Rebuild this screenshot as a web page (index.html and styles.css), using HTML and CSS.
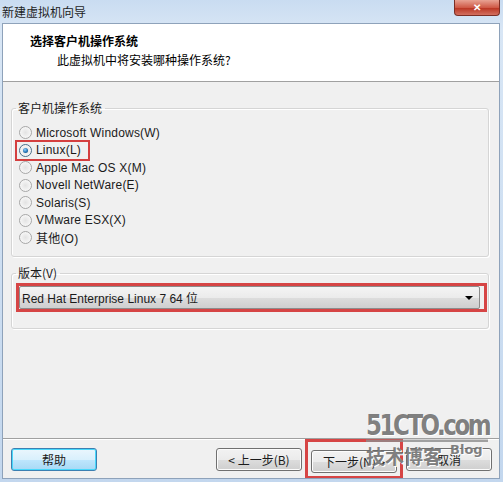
FILE: index.html
```html
<!DOCTYPE html>
<html lang="zh-CN">
<head>
    <meta charset="UTF-8">
    <title>新建虚拟机向导</title>
    <link rel="stylesheet" href="styles.css">
</head>
<body>
    <div class="window">
        <div class="titlebar">
            <span class="title">新建虚拟机向导</span>
            <span class="close">&#x2715;</span>
        </div>
        <div class="client">
            <div class="header">
                <div class="head-title">选择客户机操作系统</div>
                <div class="head-sub">此虚拟机中将安装哪种操作系统?</div>
            </div>
            <div class="content">
                <fieldset class="group">
                    <legend>客户机操作系统</legend>
                    <div class="opt"><span class="radio"></span>Microsoft Windows(W)</div>
                    <div class="opt mark"><span class="radio on"></span>Linux(L)</div>
                    <div class="opt"><span class="radio"></span>Apple Mac OS X(M)</div>
                    <div class="opt"><span class="radio"></span>Novell NetWare(E)</div>
                    <div class="opt"><span class="radio"></span>Solaris(S)</div>
                    <div class="opt"><span class="radio"></span>VMware ESX(X)</div>
                    <div class="opt"><span class="radio"></span>其他(O)</div>
                </fieldset>
                <fieldset class="group version">
                    <legend>版本(V)</legend>
                    <div class="select-mark">
                        <div class="select">
                            <span>Red Hat Enterprise Linux 7 64 位</span>
                            <span class="arrow"></span>
                        </div>
                    </div>
                </fieldset>
            </div>
            <div class="footer">
                <button class="btn default">帮助</button>
                <div class="spacer"></div>
                <button class="btn">&lt; 上一步(B)</button>
                <div class="btn-mark"><button class="btn">下一步(N) &gt;</button></div>
                <button class="btn">取消</button>
            </div>
            <div class="watermark">
                <div class="wm-site">51CTO.com</div>
                <div class="wm-blog">技术博客<span>Blog</span></div>
            </div>
        </div>
    </div>
</body>
</html>
```

FILE: styles.css
```css
body {
    margin: 0;
    font-family: "Liberation Sans", "Noto Sans CJK SC", sans-serif;
    font-size: 12px;
    color: #000;
}
.window {
    width: 503px;
    height: 482px;
    background: linear-gradient(to bottom, #c9dcf1, #d8e6f5 30px, #c3d7ee);
    display: flex;
    flex-direction: column;
}
.titlebar {
    height: 23px;
    display: flex;
    align-items: center;
    justify-content: space-between;
}
.title {
    padding-left: 2px;
    font-family: "Noto Sans CJK SC", sans-serif;
    font-size: 12px;
    color: #1e1e1e;
}
.close {
    align-self: flex-start;
    width: 44px;
    height: 15px;
    margin-right: 3px;
    background: linear-gradient(to bottom, #e8a293, #cf5a47 50%, #b9321f 51%, #d27060);
    border: 1px solid #7b2e25;
    border-top: none;
    border-radius: 0 0 4px 4px;
    color: #fff;
    font-size: 10px;
    font-weight: bold;
    text-align: center;
    line-height: 15px;
}
.client {
    flex: 1;
    margin: 0 3px 3px 2px;
    border: 1px solid #8ea2ba;
    border-top: none;
    background: #f0f0f0;
    display: flex;
    flex-direction: column;
    position: relative;
}
.header {
    height: 57px;
    background: #fff;
    border-top: 1px solid #8ea2ba;
    border-bottom: 1px solid #a0a0a0;
    padding-left: 27px;
}
.head-title {
    margin-top: 9px;
    font-family: "Noto Sans CJK SC", sans-serif;
    font-weight: bold;
    font-size: 12px;
    line-height: 16px;
}
.head-sub {
    margin-top: 3px;
    padding-left: 27px;
    font-family: "Noto Sans CJK SC", sans-serif;
    font-size: 12px;
    line-height: 16px;
}
.content {
    flex: 1;
    padding: 19px 10px 0 8px;
}
.group {
    margin: 0;
    padding: 9px 0 0 0;
    border: 1px solid #d5d5d5;
    border-radius: 3px;
    box-shadow: inset 1px 1px 0 #fff, 1px 1px 0 #fff;
    box-sizing: border-box;
    height: 156px;
}
.group legend {
    margin-left: 4px;
    padding: 0 3px 0 2px;
    font-family: "Noto Sans CJK SC", sans-serif;
    font-size: 12px;
    line-height: 14px;
    color: #1a1a1a;
}
.opt {
    height: 17.5px;
    display: flex;
    align-items: center;
    margin-left: 5px;
    width: 71px;
    white-space: nowrap;
    letter-spacing: 0.2px;
    color: #1a1a1a;
}
.mark {
    outline: 2px solid #d43f3f;
}
.radio {
    width: 11px;
    height: 11px;
    border: 1px solid #a7a7a7;
    border-radius: 50%;
    background: radial-gradient(circle at 50% 50%, #e3e3e3, #f6f6f6 70%, #fff);
    margin-left: 2px;
    margin-right: 4px;
    position: relative;
    flex: none;
}
.radio.on {
    border-color: #4a6e8a;
}
.radio.on::after {
    content: "";
    position: absolute;
    left: 3px;
    top: 3px;
    width: 5px;
    height: 5px;
    border-radius: 50%;
    background: radial-gradient(circle at 40% 35%, #8fd0ff, #1f6fb0 60%, #0e3f6e);
}
.version {
    margin-top: 9px;
    height: 63px;
    padding: 3px 0 0 0;
}
.select-mark {
    margin-left: 4px;
    border: 3px solid #d64545;
    width: 465px;
}
.select {
    height: 21px;
    margin-right: 4px;
    border: 1px solid #8c8c8c;
    border-radius: 2px;
    background: linear-gradient(to bottom, #f4f4f4, #ebebeb 50%, #dddddd 51%, #cfcfcf);
    display: flex;
    align-items: center;
    justify-content: space-between;
    padding-left: 2px;
    padding-right: 6px;
    font-size: 12px;
    color: #1a1a1a;
}
.arrow {
    width: 0;
    height: 0;
    border-left: 4px solid transparent;
    border-right: 4px solid transparent;
    border-top: 4px solid #000;
}
.footer {
    height: 39px;
    border-top: 1px solid #a0a0a0;
    box-shadow: inset 0 1px 0 #fff;
    display: flex;
    align-items: center;
    padding: 0 7px 0 8px;
    gap: 8px;
}
.spacer {
    flex: 1;
}
.btn {
    width: 86px;
    height: 23px;
    border: 1px solid #707070;
    border-radius: 3px;
    background: linear-gradient(to bottom, #f2f2f2, #ebebeb 50%, #dddddd 51%, #cfcfcf);
    box-shadow: inset 0 0 0 1px #fcfcfc;
    font-family: "Noto Sans CJK SC", sans-serif;
    font-size: 12px;
    color: #1a1a1a;
    padding: 0;
    margin-top: 2px;
}
.btn.default {
    border-color: #3c7fb1;
    box-shadow: inset 0 0 0 1px #48d8fb;
    background: linear-gradient(to bottom, #eaf6fd, #d9f0fc 50%, #bee6fd 51%, #a7d9f5);
}
.btn-mark {
    align-self: stretch;
    border: 3px solid #d64545;
    border-bottom-width: 2px;
    margin: 0 -5px;
    padding: 0 3px;
    display: flex;
    align-items: center;
}
.btn-mark .btn {
    margin-top: 4px;
}
.watermark {
    position: absolute;
    right: 11px;
    bottom: 8px;
    color: rgba(105, 105, 105, 0.85);
    font-family: "DejaVu Sans", sans-serif;
    font-weight: bold;
    pointer-events: none;
    width: 122px;
}
.wm-site {
    font-size: 23px;
    letter-spacing: -2.5px;
    line-height: 24px;
    transform: scaleY(1.2);
    transform-origin: bottom left;
    border-bottom: 2px solid rgba(140, 140, 140, 0.8);
    text-shadow: 1px 1px 0 #fff;
}
.wm-blog {
    font-family: "Noto Sans CJK SC", sans-serif;
    font-size: 19px;
    line-height: 28px;
    text-shadow: 1px 1px 0 #fff;
}
.wm-blog span {
    font-family: "DejaVu Sans", sans-serif;
    font-size: 13px;
    vertical-align: top;
    line-height: 16px;
    margin-left: 8px;
}
```
